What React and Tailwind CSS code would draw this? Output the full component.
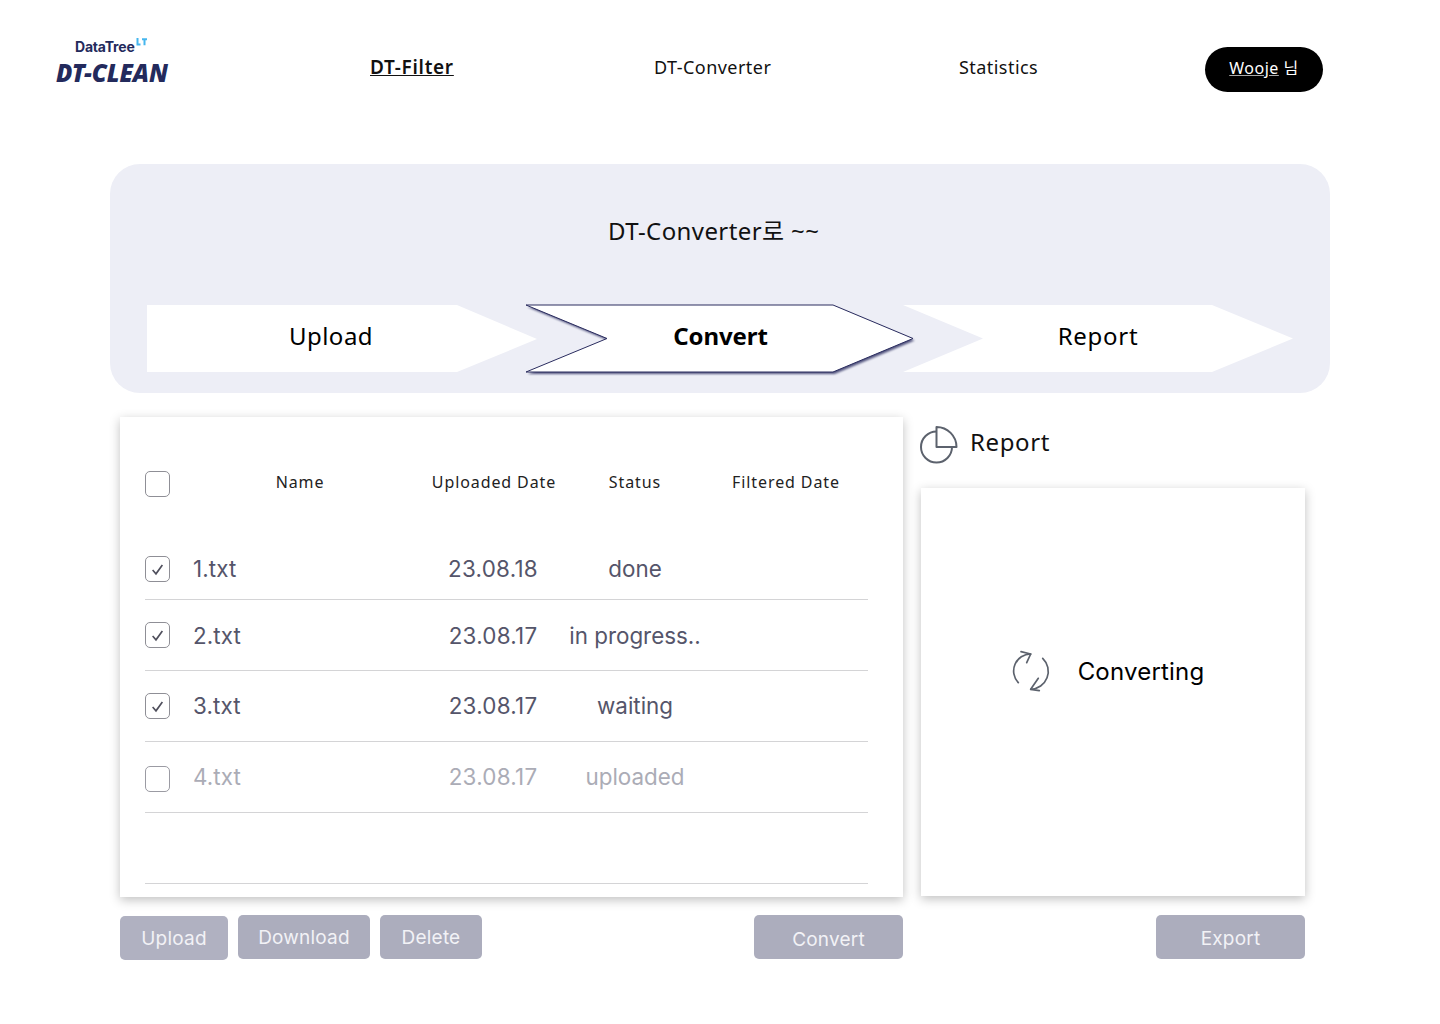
import React from "react";

const noto = "font-['Noto_Sans','Noto_Sans_CJK_KR',sans-serif]";
const inter = "font-['Inter',sans-serif]";

function Check({ on, dim }) {
  return (
    <span className={`flex h-[26px] w-[25px] items-center justify-center rounded-[5px] border ${dim ? "border-[#9b9ba3]" : "border-[#8f8f96]"} bg-white`}>
      {on && (
        <svg width="13" height="13" viewBox="0 0 12 12" fill="none" stroke="#4f4f5c" strokeWidth="1.5">
          <path d="M1.5 6.5 L4.6 10 L10.5 1.8" />
        </svg>
      )}
    </span>
  );
}

const grid = "grid grid-cols-[49px_230px_140px_142px_162px] items-center";

function Row({ name, date, status, on, dim, cls, checkCls }) {
  return (
    <div className={`${grid} h-[71px] border-b border-[#d4d4d6] text-[22.4px] ${dim ? "text-[#abacb6]" : "text-[#55556a]"} ${inter} ${cls || ""}`}>
      <span className={checkCls}><Check on={on} dim={dim} /></span>
      <span className="-ml-px tracking-[0.1px]">{name}</span>
      <span className="-ml-[2px] text-center tracking-[0.25px]">{date}</span>
      <span className="whitespace-nowrap text-center">{status}</span>
      <span />
    </div>
  );
}

function Step({ points, w, text, active, cls, textCls }) {
  return (
    <div className={`relative flex h-[69px] items-center justify-center ${cls || ""}`} style={{ width: w }}>
      <svg className="absolute left-0 top-0" width={w} height="69" viewBox={`0 0 ${w} 69`} overflow="visible">
        {active && <polygon points={points} fill="#2a2c5f" opacity="0.8" transform="translate(1.5,2)" style={{ filter: "blur(1px)" }} />}
        <polygon points={points} fill="#fff" stroke={active ? "#2a2c5f" : "none"} strokeWidth="1" />
      </svg>
      <span className={`relative mb-[8px] text-[24px] text-black ${noto} ${textCls || ""}`}>{text}</span>
    </div>
  );
}

const btn = `flex items-center justify-center rounded-[5px] bg-[#acadbd] text-[19px] tracking-[0.2px] text-[#f2f2f6] h-[44px] ${inter}`;

export default function App() {
  return (
    <div className={`w-[1440px] h-[1024px] bg-white ${noto}`}>
      <header className="flex h-[164px] items-start">
        <div className="ml-[56px] mt-[37px] w-[314px]">
          <div className="flex h-[20px] items-start pl-[19px]">
            <span className={`text-[14px] font-bold leading-[20px] tracking-[-0.2px] text-[#232a5c] ${inter}`}>DataTree</span>
            <svg width="11" height="10" viewBox="0 0 11 10" className="mt-[1px] ml-[1px]" fill="none" stroke="#45b6ee" strokeWidth="2">
              <path d="M1.5 0v6.5h3M6 1.2h5M8.5 1.2v6" />
            </svg>
          </div>
          <div className="mt-[1px] text-[24px] font-black italic leading-[30px] tracking-[-0.05px] text-[#232a5c] font-['Noto_Sans',sans-serif]">DT-CLEAN</div>
        </div>
        <nav className="mt-[47px] flex items-start text-[18px] tracking-[0.45px] text-[#111] leading-[40px]">
          <a className="w-[284px] text-[19px] font-semibold leading-[40px] tracking-[0.7px] underline">DT-Filter</a>
          <a className="w-[305px] leading-[40px]">DT-Converter</a>
          <a className="w-[246px] leading-[40px]">Statistics</a>
          <a className="flex h-[45px] w-[118px] items-center justify-center rounded-full bg-black pb-[3px] text-[16px] tracking-[0.5px] text-white">
            <span className="underline decoration-[#aaa]">Wooje</span>&nbsp;님
          </a>
        </nav>
      </header>

      <section className="ml-[110px] h-[229px] w-[1220px] rounded-[30px] bg-[#edeef6] pl-[37px] pt-[51px]">
        <h1 className="ml-[461px] whitespace-nowrap text-[24px] font-normal leading-[32px] tracking-[0.4px] text-[#111]">DT-Converter로 ~~</h1>
        <div className="mt-[58px] flex">
          <Step w={390} points="0,0 310,0 390,34 310,67 0,67" text="Upload" textCls="-ml-[22px] tracking-[0.5px]" />
          <Step w={388} cls="-ml-[11px] z-10" active points="0,0 307,0 387,33.5 307,67 0,67 81,33.5" text="Convert" textCls="ml-[1px] font-bold tracking-[-0.1px]" />
          <Step w={390} cls="-ml-[11px]" points="0,0 309,0 390,33.5 309,67 0,67 80,33.5" text="Report" textCls="tracking-[0.7px]" />
        </div>
      </section>

      <main className="ml-[120px] mt-[24px] flex items-start">
        <div>
          <div className="h-[480px] w-[783px] bg-white px-[25px] pt-[54px] shadow-[0_3px_10px_rgba(0,0,0,0.25)]">
            <div className={`${grid} h-[26px] text-[16px] tracking-[0.9px] text-[#222] ${noto}`}>
              <Check />
              <span className="-translate-y-[2px] pr-[18px] text-center">Name</span>
              <span className="-translate-y-[2px] whitespace-nowrap text-center">Uploaded Date</span>
              <span className="-translate-y-[2px] text-center">Status</span>
              <span className="-translate-y-[2px] -translate-x-[1px] whitespace-nowrap text-center">Filtered Date</span>
            </div>
            <div className="mt-[32px] w-[723px]">
              <Row name="1.txt" date="23.08.18" status="done" on cls="pt-[10px]" />
              <Row name="2.txt" date="23.08.17" status="in progress.." on cls="pt-[1px]" checkCls="-mt-[1px]" />
              <Row name="3.txt" date="23.08.17" status="waiting" on />
              <Row name="4.txt" date="23.08.17" status="uploaded" dim checkCls="mt-[3px]" />
              <div className="h-[71px] border-b border-[#d4d4d6]" />
            </div>
          </div>
          <div className="mt-[18px] flex items-start">
            <button className={`${btn} mt-px w-[108px] bg-[#b0b1c1] pt-[2px]`}>Upload</button>
            <button className={`${btn} ml-[10px] w-[132px] pt-[2px]`}>Download</button>
            <button className={`${btn} ml-[10px] w-[102px] pt-[2px]`}>Delete</button>
            <button className={`${btn} ml-[272px] w-[149px] pt-[7px]`}>Convert</button>
          </div>
        </div>

        <div className="ml-[18px]">
          <div className="-ml-px flex h-[71px] items-start pt-[9px]">
            <svg width="38" height="38" viewBox="0 0 38 38" fill="none" stroke="#5c626d" strokeWidth="2" strokeLinejoin="round">
              <path d="M16.5 5.5 A15.5 15.5 0 1 0 32 21" />
              <path d="M16.5 1 A20 20 0 0 1 36.5 21 H16.5 Z" />
            </svg>
            <span className="ml-[12px] text-[24px] leading-[32px] tracking-[0.6px] text-[#111]">Report</span>
          </div>
          <div className="flex h-[408px] w-[384px] items-center justify-center bg-white shadow-[0_3px_10px_rgba(0,0,0,0.25)]">
            <div className="-ml-[11px] -mt-[40px] flex items-center">
              <svg width="40" height="44" viewBox="0 0 40 44" fill="none" stroke="#5c626d" strokeWidth="1.7" strokeLinecap="round" strokeLinejoin="round">
                <path d="M19.7 4 A17 17 0 0 0 7.3 32.7" />
                <path d="M10 1.7 L19.7 4 L15.7 12.7" />
                <path d="M31.7 8.3 A18 18 0 0 1 19.7 39.3" />
                <path d="M27.3 28.3 L19.7 39.3 L28.3 40.7" />
              </svg>
              <span className={`ml-[27px] text-[24px] leading-[36px] tracking-[0.2px] text-black ${inter}`}>Converting</span>
            </div>
          </div>
          <div className="mt-[19px] flex justify-end">
            <button className={`${btn} w-[149px] pt-[5px]`}>Export</button>
          </div>
        </div>
      </main>
    </div>
  );
}
